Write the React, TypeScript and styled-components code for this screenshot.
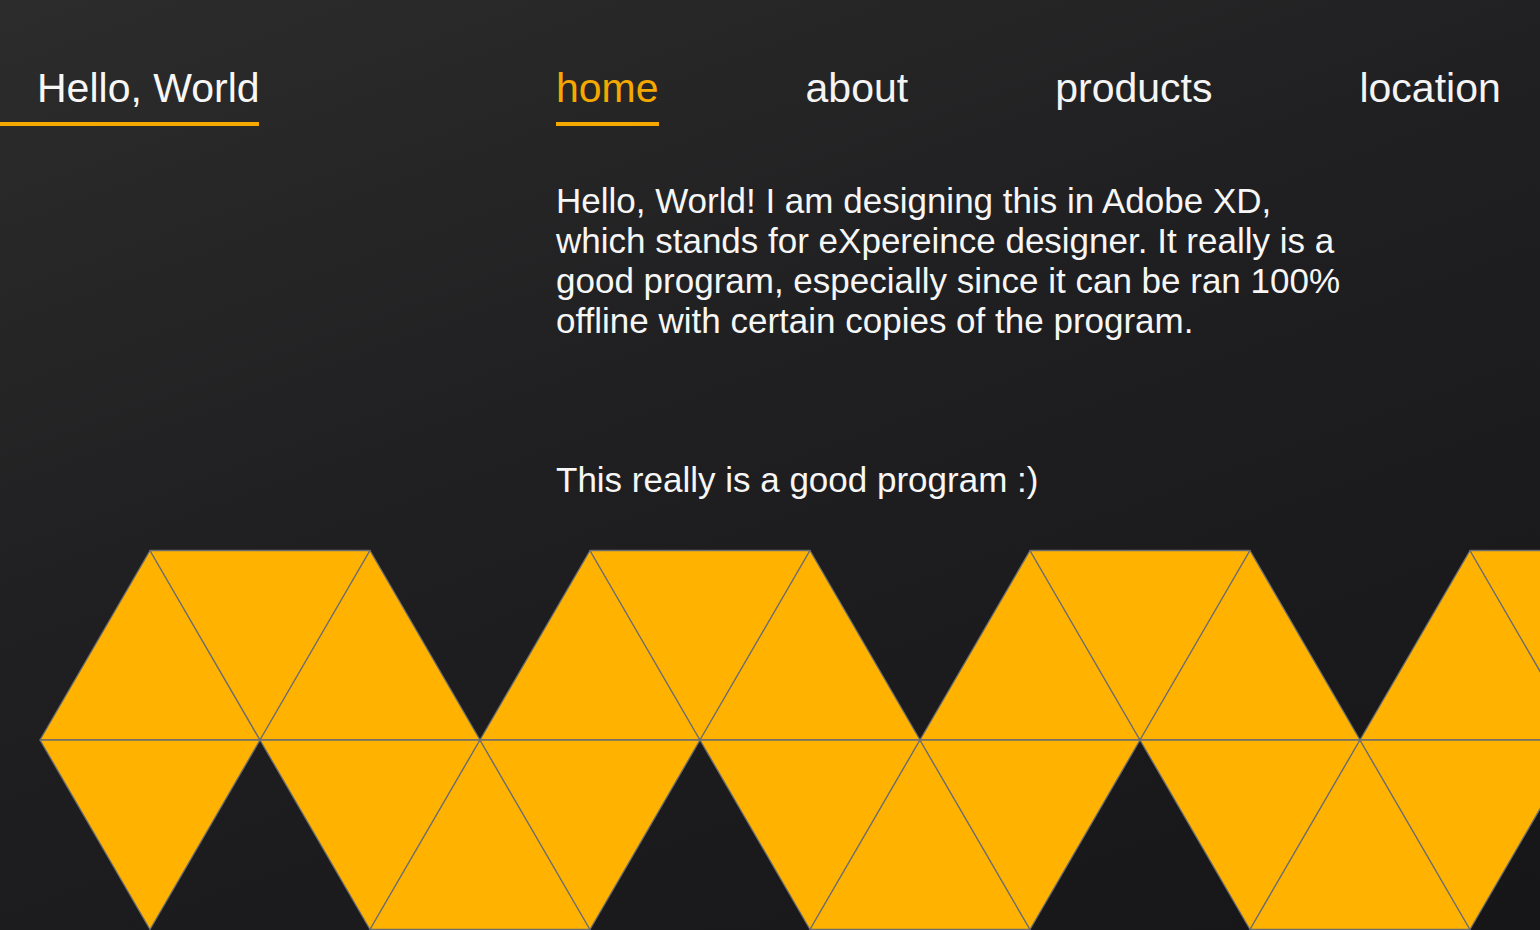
import styled, { createGlobalStyle } from "styled-components";

const GlobalStyle = createGlobalStyle`
  html, body {
    margin: 0;
    padding: 0;
  }

  body {
    font-family: "Liberation Sans", Arial, sans-serif;
    background: #1c1c1e;
  }
`

const ACCENT = '#f5a800'
const YELLOW = '#ffb300'

const Page = styled.div`
  display: flex;
  flex-direction: column;
  height: 930px;
  overflow: hidden;
  background: linear-gradient(160deg, #2c2c2c 0%, #1f1f21 45%, #161618 100%);
  color: #f4f4f4;
`

const Header = styled.header`
  display: flex;
  align-items: flex-end;
  padding-top: 64px;
`

const Brand = styled.div`
  width: 222px;
  padding-left: 37px;
  padding-bottom: 10px;
  border-bottom: 4px solid ${ACCENT};
  font-size: 41px;
  line-height: 48px;
  color: #f7f7f7;
  white-space: nowrap;
`

const Nav = styled.nav`
  display: flex;
  gap: 147px;
  margin-left: 297px;
`

const NavLink = styled.a<{ $active?: boolean }>`
  display: block;
  padding-bottom: 10px;
  border-bottom: 4px solid ${props => props.$active ? ACCENT : 'transparent'};
  font-size: 41px;
  line-height: 48px;
  color: ${props => props.$active ? ACCENT : '#f4f4f4'};
  text-decoration: none;
  cursor: pointer;
  white-space: nowrap;
`

const Content = styled.main`
  display: flex;
  flex-direction: column;
  gap: 119px;
  margin-left: 556px;
  padding-top: 55px;
  width: 790px;
`

const Paragraph = styled.p`
  margin: 0;
  font-size: 35px;
  line-height: 40px;
  color: #f6f6f6;
`

const PatternBand = styled.div`
  margin-top: auto;
  height: 381px;
  line-height: 0;
`

const S = 220
const T = 550.5
const M = 740
const B = 929.5

const pts = (list: number[][]) => list.map(p => p.join(',')).join(' ')

const triangles: number[][][] = []
for (let k = 0; k < 7; k++) {
  // top band, pointing up
  triangles.push([[150 + k * S, T], [40 + k * S, M], [260 + k * S, M]])
  // top band, pointing down (every other one)
  if (k % 2 === 0) triangles.push([[150 + k * S, T], [370 + k * S, T], [260 + k * S, M]])
  // bottom band, pointing down
  triangles.push([[40 + k * S, M], [260 + k * S, M], [150 + k * S, B]])
  // bottom band, pointing up (every other one)
  if (k % 2 === 1) triangles.push([[260 + k * S, M], [150 + k * S, B], [370 + k * S, B]])
}

const TrianglePattern = () => (
  <svg width="1540" height="381" viewBox="0 549 1540 381">
    {triangles.map((tri, index) => (
      <polygon
        key={index}
        points={pts(tri)}
        fill={YELLOW}
        stroke="#6e6e6e"
        strokeWidth="1.3"
        strokeLinejoin="round"
      />
    ))}
  </svg>
)

const App = () => {
  const links = ['home', 'about', 'products', 'location']

  return (
    <>
      <GlobalStyle />
      <Page>
        <Header>
          <Brand>Hello, World</Brand>
          <Nav>
            {links.map((link, index) => (
              <NavLink key={link} $active={index === 0}>{link}</NavLink>
            ))}
          </Nav>
        </Header>
        <Content>
          <Paragraph>
            Hello, World! I am designing this in Adobe XD, which stands for eXpereince designer.
            It really is a good program, especially since it can be ran 100% offline with certain
            copies of the program.
          </Paragraph>
          <Paragraph>This really is a good program :)</Paragraph>
        </Content>
        <PatternBand>
          <TrianglePattern />
        </PatternBand>
      </Page>
    </>
  )
}

export default App
